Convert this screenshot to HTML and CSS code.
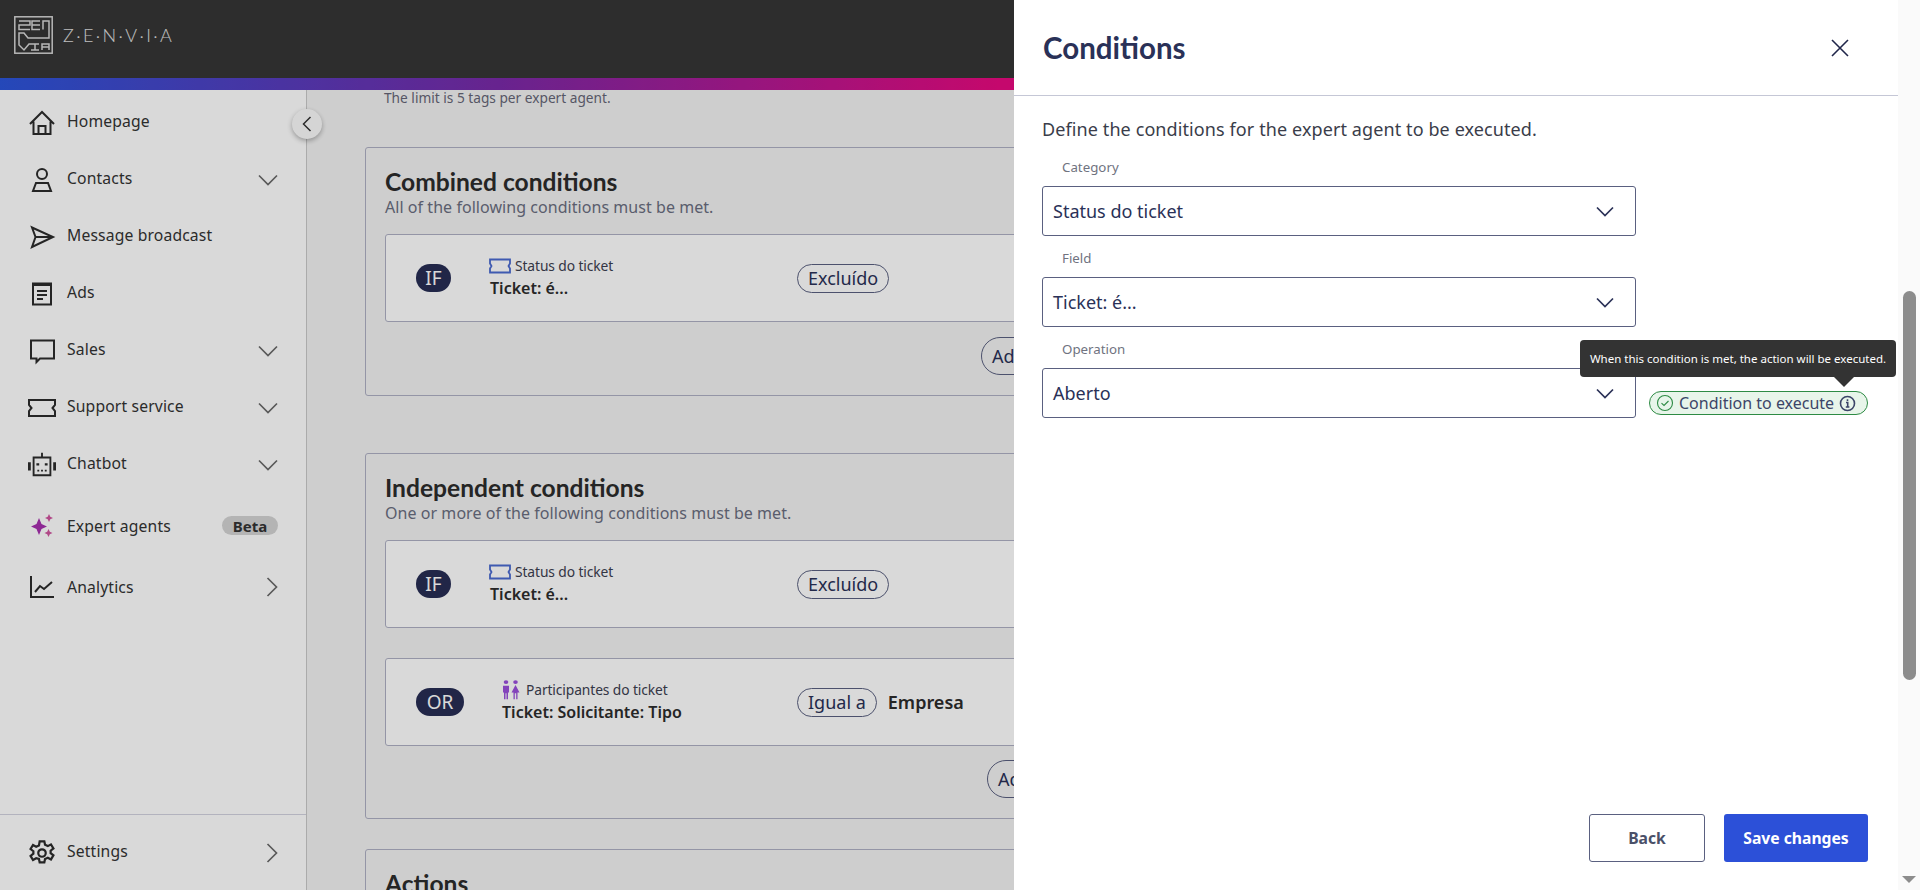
FILE: index.html
```html
<!DOCTYPE html>
<html lang="en">
<head>
<meta charset="utf-8">
<title>Zenvia - Conditions</title>
<link rel="stylesheet" href="styles.css">
</head>
<body>
<div class="app">
  <header class="topbar">
    <div class="brand">
      <svg class="logo" width="39" height="38" viewBox="0 0 39 38" fill="none" stroke="#d8d8d8" stroke-width="1.500">
        <rect x=".8" y=".8" width="37.400" height="36.400"/>
        <path d="M5 5h11v4H5v4.500h11M26 5h-8v8.500h8M18 9h8M29 13.500V5h6v17H14l-4-5H5v12l5 5 5-6h6M17 28h8M21 28v6M17 34h8M28 34v-6h7v6M28 31h7"/>
      </svg>
      <span class="wordmark">Z·E·N·V·I·A</span>
    </div>
  </header>
  <div class="stripe"></div>
  <div class="body">
    <aside class="sidebar">
      <nav class="nav">
        <a class="nav-item">
          <svg class="ico" viewBox="0 0 28 28" fill="none" stroke="#2c2c2c" stroke-width="2"><path d="M2 15 14 3l12 12M5.500 12.500V25h17V12.500M10.500 25v-8h7v8"/></svg>
          <span class="label">Homepage</span>
        </a>
        <a class="nav-item">
          <svg class="ico" viewBox="0 0 28 28" fill="none" stroke="#2c2c2c" stroke-width="2"><circle cx="14" cy="8" r="5"/><path d="M8 17h12l3 8H5z"/></svg>
          <span class="label">Contacts</span>
          <svg class="chev" viewBox="0 0 20 12" fill="none" stroke="#6a6a6a" stroke-width="1.700"><path d="M1 1.500 10 10.500 19 1.500"/></svg>
        </a>
        <a class="nav-item">
          <svg class="ico" viewBox="0 0 28 28" fill="none" stroke="#2c2c2c" stroke-width="2"><path d="M4 4.500 25 14 4 24l3.500-10zM7.500 14H25"/></svg>
          <span class="label">Message broadcast</span>
        </a>
        <a class="nav-item">
          <svg class="ico" viewBox="0 0 28 28" fill="none" stroke="#2c2c2c" stroke-width="2"><path d="M5 3.500h18v21H5z"/><path d="M5 4.500h18" stroke-width="3"/><path d="M9 11h10M9 15h10M9 19h6"/></svg>
          <span class="label">Ads</span>
        </a>
        <a class="nav-item">
          <svg class="ico" viewBox="0 0 28 28" fill="none" stroke="#2c2c2c" stroke-width="2"><path d="M3 3.500h23v18H12l-3.500 3.500v-3.500H3z"/></svg>
          <span class="label">Sales</span>
          <svg class="chev" viewBox="0 0 20 12" fill="none" stroke="#6a6a6a" stroke-width="1.700"><path d="M1 1.500 10 10.500 19 1.500"/></svg>
        </a>
        <a class="nav-item">
          <svg class="ico" viewBox="0 0 28 28" fill="none" stroke="#2c2c2c" stroke-width="2"><path d="M1 6h26v5l-2.500 3 2.500 3v5H1v-5l2.500-3L1 11z"/></svg>
          <span class="label">Support service</span>
          <svg class="chev" viewBox="0 0 20 12" fill="none" stroke="#6a6a6a" stroke-width="1.700"><path d="M1 1.500 10 10.500 19 1.500"/></svg>
        </a>
        <a class="nav-item">
          <svg class="ico" viewBox="0 0 30 28" fill="none" stroke="#2c2c2c" stroke-width="2"><path d="M6 6h18v19H6zM15 6V1"/><path d="M1.500 11v9M28.500 11v9" stroke-width="3"/><path d="M10.500 12v2.500M19.500 12v2.500" stroke-width="3"/><path d="M10 20h10" stroke-dasharray="2 2"/></svg>
          <span class="label">Chatbot</span>
          <svg class="chev" viewBox="0 0 20 12" fill="none" stroke="#6a6a6a" stroke-width="1.700"><path d="M1 1.500 10 10.500 19 1.500"/></svg>
        </a>
        <a class="nav-item nav-item-tall">
          <svg class="ico" viewBox="0 0 28 28"><path d="M11 6 13.500 12 19 14.500 13.500 17 11 23 8.500 17 3 14.500 8.500 12z" fill="#a62fae"/><path d="M21 2l1.300 2.700L25 6l-2.700 1.300L21 10l-1.300-2.700L17 6l2.700-1.300zM20.500 17l1.300 2.700 2.700 1.300-2.700 1.300-1.300 2.700-1.300-2.700-2.700-1.300 2.700-1.300z" fill="#d0559f"/></svg>
          <span class="label">Expert agents</span>
          <span class="beta">Beta</span>
        </a>
        <a class="nav-item">
          <svg class="ico" viewBox="0 0 28 28" fill="none" stroke="#2c2c2c" stroke-width="2"><path d="M3 3v21h23"/><path d="M7 19l5-6 4 3 8-7"/></svg>
          <span class="label">Analytics</span>
          <svg class="chev-r" viewBox="0 0 12 20" fill="none" stroke="#6a6a6a" stroke-width="1.700"><path d="M1.500 1 10.500 10 1.500 19"/></svg>
        </a>
      </nav>
      <div class="nav-foot">
        <a class="nav-item">
          <svg class="ico" viewBox="0 0 24 24" fill="none" stroke="#2c2c2c" stroke-width="1.900"><circle cx="12" cy="12" r="3.200"/><path d="M10 2h4l.6 3 2.400 1.100 2.700-1.500 2.100 3.500-2.400 1.900v2.100l2.400 1.900-2.100 3.500-2.700-1.500-2.400 1.100-.6 3h-4l-.6-3L7 16.500l-2.700 1.500-2.100-3.500 2.400-1.900v-2.100L2.200 8.600l2.100-3.500L7 6.600l2.400-1.100z"/></svg>
          <span class="label">Settings</span>
          <svg class="chev-r" viewBox="0 0 12 20" fill="none" stroke="#6a6a6a" stroke-width="1.700"><path d="M1.500 1 10.500 10 1.500 19"/></svg>
        </a>
      </div>
    </aside>
    <main class="main">
      <p class="limit">The limit is 5 tags per expert agent.</p>
      <section class="card card-combined">
        <h2 class="card-title">Combined conditions</h2>
        <p class="card-sub">All of the following conditions must be met.</p>
        <div class="rule">
          <span class="op">IF</span>
          <div class="rule-info">
            <div class="rule-cat">
              <svg class="ticket" viewBox="0 0 22 16" fill="none" stroke="#4a6ad0" stroke-width="1.800"><path d="M1 1.500h20v4l-1.500 2.500 1.500 2.500v4H1v-4L2.500 8 1 5.500z"/></svg>
              <span>Status do ticket</span>
            </div>
            <div class="rule-name">Ticket: é...</div>
          </div>
          <span class="pill">Excluído</span>
        </div>
        <button class="add add-combined">Add condition</button>
      </section>
      <section class="card card-independent">
        <h2 class="card-title">Independent conditions</h2>
        <p class="card-sub">One or more of the following conditions must be met.</p>
        <div class="rule">
          <span class="op">IF</span>
          <div class="rule-info">
            <div class="rule-cat">
              <svg class="ticket" viewBox="0 0 22 16" fill="none" stroke="#4a6ad0" stroke-width="1.800"><path d="M1 1.500h20v4l-1.500 2.500 1.500 2.500v4H1v-4L2.500 8 1 5.500z"/></svg>
              <span>Status do ticket</span>
            </div>
            <div class="rule-name">Ticket: é...</div>
          </div>
          <span class="pill">Excluído</span>
        </div>
        <div class="rule rule-or">
          <span class="op op-wide">OR</span>
          <div class="rule-info rule-info-or">
            <div class="rule-cat">
              <svg class="people" viewBox="0 0 18 24" preserveAspectRatio="none" fill="#9a4fdc"><circle cx="4" cy="2.500" r="2.300"/><circle cx="13.500" cy="2.500" r="2.300"/><path d="M1 7h6v8H6v8H4.500v-7h-1v7H2v-8H1zM13.500 6l4 9h-2v8h-1.300v-7h-1.400v7H11.500v-8h-2z"/></svg>
              <span>Participantes do ticket</span>
            </div>
            <div class="rule-name">Ticket: Solicitante: Tipo</div>
          </div>
          <span class="pill">Igual a</span>
          <span class="rule-value">Empresa</span>
        </div>
        <button class="add add-independent">Add condition</button>
      </section>
      <section class="card">
        <h2 class="card-title">Actions</h2>
      </section>
    </main>
  </div>
  <button class="collapse" aria-label="Collapse">
    <svg width="10" height="16" viewBox="0 0 10 16" fill="none" stroke="#333" stroke-width="1.500"><path d="M8.500 1 1.500 8l7 7"/></svg>
  </button>
</div>
<div class="overlay"></div>
<aside class="panel">
  <div class="panel-main">
    <header class="panel-head">
      <h1 class="panel-title">Conditions</h1>
      <svg class="close" width="18" height="18" viewBox="0 0 18 18" fill="none" stroke="#20264a" stroke-width="1.600"><path d="M1 1l16 16M17 1 1 17"/></svg>
    </header>
    <div class="panel-body">
      <p class="panel-desc">Define the conditions for the expert agent to be executed.</p>
      <div class="field">
        <label class="field-label">Category</label>
        <div class="select"><span>Status do ticket</span><svg class="sel-chev" viewBox="0 0 18 11" fill="none" stroke="#2a3157" stroke-width="1.700"><path d="M1 1.500 9 9.500l8-8"/></svg></div>
      </div>
      <div class="field">
        <label class="field-label">Field</label>
        <div class="select"><span>Ticket: é...</span><svg class="sel-chev" viewBox="0 0 18 11" fill="none" stroke="#2a3157" stroke-width="1.700"><path d="M1 1.500 9 9.500l8-8"/></svg></div>
      </div>
      <div class="field field-row">
        <div class="field-main">
          <label class="field-label">Operation</label>
          <div class="select"><span>Aberto</span><svg class="sel-chev" viewBox="0 0 18 11" fill="none" stroke="#2a3157" stroke-width="1.700"><path d="M1 1.500 9 9.500l8-8"/></svg></div>
        </div>
        <div class="chip">
          <svg class="chip-ico" width="18" height="18" viewBox="0 0 18 18" fill="none" stroke="#2e8b44" stroke-width="1.100"><circle cx="9" cy="9" r="7.500"/><path d="M5.500 9.200 8 11.500l4.500-4.500"/></svg>
          <span>Condition to execute</span>
          <svg class="chip-ico" width="17" height="17" viewBox="0 0 17 17" fill="none" stroke="#3c4568" stroke-width="1.600"><circle cx="8.500" cy="8.500" r="7"/><path d="M7 7.500h1.700V12M6.800 12h3.600M8.500 4.300v1.600"/></svg>
          <div class="tooltip">When this condition is met, the action will be executed.</div>
        </div>
      </div>
    </div>
    <footer class="panel-foot">
      <button class="btn btn-back">Back</button>
      <button class="btn btn-save">Save changes</button>
    </footer>
  </div>
  <div class="scrollbar">
    <div class="thumb"></div>
    <div class="arrow"></div>
  </div>
</aside>
</body>
</html>
```
FILE: styles.css
```css
* { box-sizing: border-box; }
html, body { margin: 0; height: 100%; overflow: hidden; }
body { font-family: "Noto Sans", sans-serif; color: #2c2c2c; background: #f3f3f3; }
h1, h2, p { margin: 0; }
button { font-family: inherit; cursor: pointer; }

.app { position: relative; height: 890px; display: flex; flex-direction: column; }
.topbar { height: 78px; background: #353535; display: flex; align-items: center; padding-left: 14px; }
.brand { display: flex; align-items: center; gap: 10px; margin-top: -8px; }
.logo { display: block; }
.wordmark { font-family: "Lato", sans-serif; font-weight: 300; font-size: 18px; letter-spacing: 2.400px; color: #e0e0e0; }
.stripe { height: 12px; background: linear-gradient(90deg, #2b55da 0%, #7a2aa8 26%, #e80a80 52%); }
.body { flex: 1; display: flex; min-height: 0; }

.sidebar { width: 307px; flex: none; background: #fff; border-right: 1px solid #c9c9c9; display: flex; flex-direction: column; }
.nav { flex: 1; padding-top: 4px; }
.nav-item { height: 57px; display: flex; align-items: center; padding: 0 28px 0 28px; gap: 11px; font-size: 15.700px; color: #333; }
.nav-item-tall { height: 65px; }
.ico { width: 28px; height: 28px; flex: none; }
.label { flex: 1; letter-spacing: .15px; margin-bottom: 4px; }
.nav-item-tall .label, .nav-item-tall + .nav-item .label { margin-bottom: 0; }
.chev { width: 20px; height: 12px; flex: none; }
.chev-r { width: 12px; height: 20px; flex: none; }
.beta { flex: none; width: 56px; height: 19px; border-radius: 10px; background: #d4d4d4; font-size: 15px; font-weight: 700; display: flex; align-items: center; justify-content: center; }
.nav-foot { border-top: 1px solid #d3d3e0; height: 76px; display: flex; align-items: center; }
.nav-foot .nav-item { flex: 1; }

.collapse { position: absolute; left: 292px; top: 109px; width: 30px; height: 30px; border-radius: 50%; border: 0; background: #fbfbfb; box-shadow: 0 2px 5px rgba(0,0,0,.3); display: flex; align-items: center; justify-content: center; padding: 0; }

.main { flex: 1; overflow: hidden; padding-left: 58px; min-width: 0; }
.limit { font-size: 13.700px; color: #667; padding: 0 0 0 19px; line-height: 16px; margin-bottom: 41px; }
.card { width: 1500px; border: 1px solid #aeb0c4; border-radius: 3px; padding: 19px 19px 0; margin-bottom: 30px; }
.card-combined { height: 249px; margin-bottom: 57px; }
.card-independent { height: 366px; }
.card-title { font-family: "Lato", sans-serif; font-size: 24.600px; line-height: 30px; font-weight: 700; color: #2c2c2c; }
.card-sub { font-size: 16px; line-height: 20px; color: #6a6e80; margin-bottom: 17px; letter-spacing: .05px; }
.rule { height: 88px; background: #fff; border: 1px solid #aeb0c4; border-radius: 3px; display: flex; align-items: center; padding-left: 30px; margin-bottom: 30px; }
.op { flex: none; width: 35px; height: 28px; border-radius: 14px; background: #272d54; color: #fff; font-size: 19px; display: flex; align-items: center; justify-content: center; margin-right: 39px; }
.op-wide { width: 48px; margin-right: 38px; }
.rule-info { width: 307px; flex: none; }
.rule-info-or { width: 295px; }
.rule-cat { display: flex; align-items: center; gap: 4px; font-size: 13.800px; line-height: 20px; color: #3c4050; letter-spacing: -.1px; }
.ticket { width: 22px; height: 16px; flex: none; margin-left: -1px; }
.people { width: 18px; height: 20px; flex: none; margin-right: 2px; }
.rule-name { font-size: 16px; line-height: 24px; font-weight: 600; color: #2c2c2c; }
.pill { flex: none; border: 1px solid #5a6080; border-radius: 15px; height: 29px; padding: 0 10px; font-size: 18px; line-height: 27px; color: #2a3157; }
.rule-value { font-size: 18px; font-weight: 600; margin-left: 11px; color: #2c2c2c; }
.add { display: block; height: 38px; border: 1px solid #5a6080; border-radius: 19px; background: transparent; font-size: 18px; color: #2a3157; padding: 0 10px; }
.add-combined { margin-left: 596px; margin-top: -15px; }
.add-independent { margin-left: 602px; margin-top: -16px; }

.overlay { position: fixed; inset: 0; background: rgba(0,0,0,.15); }
.panel { position: fixed; top: 0; right: 0; bottom: 0; width: 906px; background: #fff; display: flex; }
.panel-main { flex: 1; display: flex; flex-direction: column; min-width: 0; }
.panel-head { height: 96px; border-bottom: 1px solid #c5c7d6; display: flex; align-items: center; justify-content: space-between; padding: 0 49px 0 29px; flex: none; }
.panel-title { font-family: "Lato", sans-serif; font-size: 29.500px; font-weight: 700; color: #2a3157; margin-top: -1px; }
.panel-body { flex: 1; padding: 21px 0 0 28px; }
.panel-desc { font-size: 18px; line-height: 24px; color: #3a3d4a; margin-bottom: 16px; letter-spacing: .1px; }
.field { margin-bottom: 12px; }
.field-row { display: flex; align-items: flex-end; position: relative; margin-bottom: 0; }
.field-main { flex: none; }
.field-label { display: block; font-size: 13.300px; line-height: 20px; color: #70737f; padding-left: 20px; margin-bottom: 9px; }
.select { width: 594px; height: 50px; border: 1px solid #5a6080; border-radius: 3px; display: flex; align-items: center; justify-content: space-between; padding: 0 21px 0 10px; font-size: 18px; color: #2a3157; }
.sel-chev { width: 18px; height: 11px; flex: none; }
.chip { position: relative; flex: none; margin: 0 0 3px 13px; width: 219px; height: 24px; border: 1px solid #2e8b44; border-radius: 12px; background: #e8f5ea; display: flex; align-items: center; gap: 5px; padding: 0 6px; font-size: 16px; color: #3c4568; white-space: nowrap; }
.chip-ico { flex: none; }
.tooltip { position: absolute; right: -29px; bottom: 37px; width: 316px; height: 37px; border-radius: 4px; background: #333; color: #fff; font-size: 11.500px; display: flex; align-items: center; justify-content: center; }
.tooltip::after { content: ""; position: absolute; right: 42px; top: 100%; border: 10px solid transparent; border-top-color: #333; border-bottom: 0; }
.panel-foot { flex: none; display: flex; justify-content: flex-end; gap: 19px; padding: 0 30px 28px 0; }
.btn { height: 48px; border-radius: 3px; font-size: 15.700px; font-weight: 700; }
.btn-back { width: 116px; background: #fff; border: 1px solid #5a6080; color: #4a5068; }
.btn-save { width: 144px; background: #2c50d8; border: 0; color: #fff; }

.scrollbar { position: relative; width: 22px; flex: none; background: #fafafa; }
.thumb { position: absolute; left: 5px; top: 291px; width: 13px; height: 389px; border-radius: 7px; background: #8c8c8c; }
.arrow { position: absolute; left: 4px; bottom: 7px; border: 7px solid transparent; border-top: 7px solid #8c8c8c; border-bottom: 0; }
```
